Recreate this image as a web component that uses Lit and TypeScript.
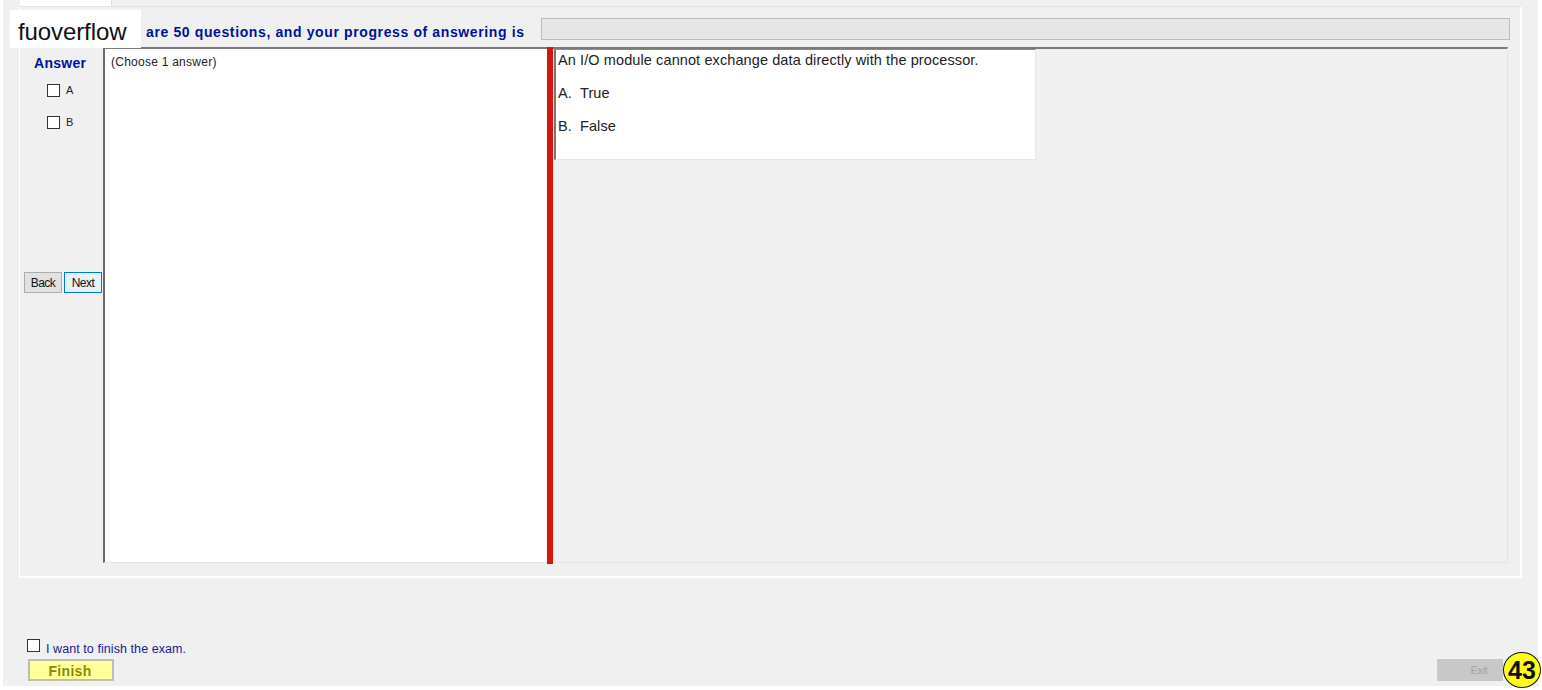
import { LitElement, html, css } from "lit";
import { customElement } from "lit/decorators.js";

@customElement("app-root")
export class AppRoot extends LitElement {
  static styles = css`
    :host { display: block; width: 1542px; height: 690px; background: #fff; position: relative; overflow: hidden; font-family: "Liberation Sans", Arial, sans-serif; color: #111; }
    .window { margin-left: 3px; width: 1535px; height: 686px; background: #f0f0f0; display: flex; flex-direction: column; box-sizing: border-box; padding-left: 16px; }
    .tab { width: 91px; height: 6px; margin-left: 1px; background: #fff; border-right: 1px solid #e0e0e0; flex: none; }
    .panel { width: 1503px; height: 572px; box-sizing: border-box; flex: none; border: 1px solid #e2e2e2; border-right: 2px solid #fff; border-bottom: 2px solid #fff; border-left: 1px solid #fff; padding: 11px 12px 0 2px; display: flex; flex-direction: column; }
    .progress-row { height: 22px; display: flex; align-items: flex-start; justify-content: space-between; flex: none; }
    .progress-text { font-weight: 700; font-size: 14px; line-height: 16px; letter-spacing: 0.62px; color: #00129a; margin: 6px 0 0 124px; white-space: nowrap; }
    .progress-bar { width: 969px; height: 22px; box-sizing: border-box; background: #e6e6e6; border: 1px solid #bcbcbc; margin-right: -2px; }
    .content { margin-top: 7px; height: 516px; display: flex; flex: none; }
    .side { width: 81px; flex: none; display: flex; flex-direction: column; align-items: stretch; }
    .answer-title { font-weight: 700; font-size: 14px; letter-spacing: 0.3px; color: #00129a; margin: 8px 0 0 12px; line-height: 16px; }
    .opts { display: flex; flex-direction: column; gap: 20px; margin: 13px 0 0 25px; }
    .opt { display: flex; align-items: center; gap: 6px; height: 12px; font-size: 11px; letter-spacing: -0.2px; color: #222; }
    .box { width: 13px; height: 13px; box-sizing: border-box; border: 1px solid #333; background: #fff; flex: none; }
    .nav { display: flex; gap: 2px; margin: 144px 0 0 2px; }
    .btn { width: 38px; height: 21px; box-sizing: border-box; display: flex; align-items: center; justify-content: center; font-size: 12px; letter-spacing: -0.55px; color: #111; }
    .back { background: #e1e1e1; border: 1px solid #adadad; }
    .next { background: #e5f1fb; border: 1px solid #0078d7; }
    .left-pane { width: 444px; flex: none; box-sizing: border-box; background: #fff; border-left: 2px solid #6a6a6a; border-top: 2px solid #7a7a7a; border-bottom: 1px solid #e4e4e4; padding: 6px 0 0 6px; font-size: 12px; line-height: 14px; letter-spacing: 0.25px; color: #222; }
    .divider { width: 6px; flex: none; background: #d8140c; box-sizing: border-box; height: 517px; }
    .right-pane { flex: 1; box-sizing: border-box; border-top: 2px solid #7a7a7a; border-right: 1px solid #e4e4e4; border-bottom: 1px solid #e4e4e4; }
    .qbox { margin-left: 1px; width: 482px; height: 111px; box-sizing: border-box; background: #fff; border-left: 2px solid #777; border-top: 1px solid #8a8a8a; border-right: 1px solid #e6e6e6; border-bottom: 1px solid #e6e6e6; padding: 2px 0 0 2px; font-size: 14.5px; letter-spacing: 0.1px; color: #222; }
    .qbox p { margin: 0 0 16px; line-height: 17px; white-space: nowrap; }
    .qbox .lbl { display: inline-block; width: 22px; }
    .footer { margin-top: 61px; padding-left: 8px; display: flex; flex-direction: column; flex: none; }
    .finish-check { display: flex; align-items: center; gap: 6px; font-size: 12.5px; letter-spacing: 0.07px; color: #1a1a9a; height: 16px; }
    .finish-check .box { margin-top: -3px; }
    .finish-label { padding-top: 3px; }
    .bottom { display: flex; justify-content: space-between; align-items: flex-start; margin-top: 4px; }
    .finish { width: 86px; height: 22px; box-sizing: border-box; margin-left: 1px; padding: 1px 2px 0 0; background: #ffff9c; border: 2px solid #bdbdb0; display: flex; align-items: center; justify-content: center; font-weight: 700; font-size: 14px; color: #8a8a00; letter-spacing: 0.3px; }
    .exit { width: 66px; height: 22px; box-sizing: border-box; padding-left: 18px; margin-right: 35px; background: #c8c8c8; display: flex; align-items: center; justify-content: center; font-size: 11px; letter-spacing: -0.3px; color: #a4a4a4; }
    .logo { position: absolute; left: 10px; top: 10px; width: 131px; height: 38px; box-sizing: border-box; background: #fff; padding-left: 8px; font-size: 24px; line-height: 44px; letter-spacing: -0.1px; color: #111; }
    .count { position: absolute; left: 1503px; top: 652px; width: 38px; height: 36px; box-sizing: border-box; border: 1px solid #111; border-radius: 50%; background: #ffff14; display: flex; align-items: center; justify-content: center; font-weight: 700; font-size: 25px; color: #111; }
  `;

  render() {
    return html`
      <div class="window">
        <div class="tab"></div>
        <div class="panel">
          <div class="progress-row">
            <div class="progress-text">are 50 questions, and your progress of answering is</div>
            <div class="progress-bar"></div>
          </div>
          <div class="content">
            <div class="side">
              <div class="answer-title">Answer</div>
              <div class="opts">
                <div class="opt"><span class="box"></span>A</div>
                <div class="opt"><span class="box"></span>B</div>
              </div>
              <div class="nav">
                <div class="btn back">Back</div>
                <div class="btn next">Next</div>
              </div>
            </div>
            <div class="left-pane">(Choose 1 answer)</div>
            <div class="divider"></div>
            <div class="right-pane">
              <div class="qbox">
                <p>An I/O module cannot exchange data directly with the processor.</p>
                <p><span class="lbl">A.</span>True</p>
                <p><span class="lbl">B.</span>False</p>
              </div>
            </div>
          </div>
        </div>
        <div class="footer">
          <div class="finish-check"><span class="box"></span><span class="finish-label">I want to finish the exam.</span></div>
          <div class="bottom">
            <div class="finish">Finish</div>
            <div class="exit">Exit</div>
          </div>
        </div>
      </div>
      <div class="logo">fuoverflow</div>
      <div class="count">43</div>
    `;
  }
}
